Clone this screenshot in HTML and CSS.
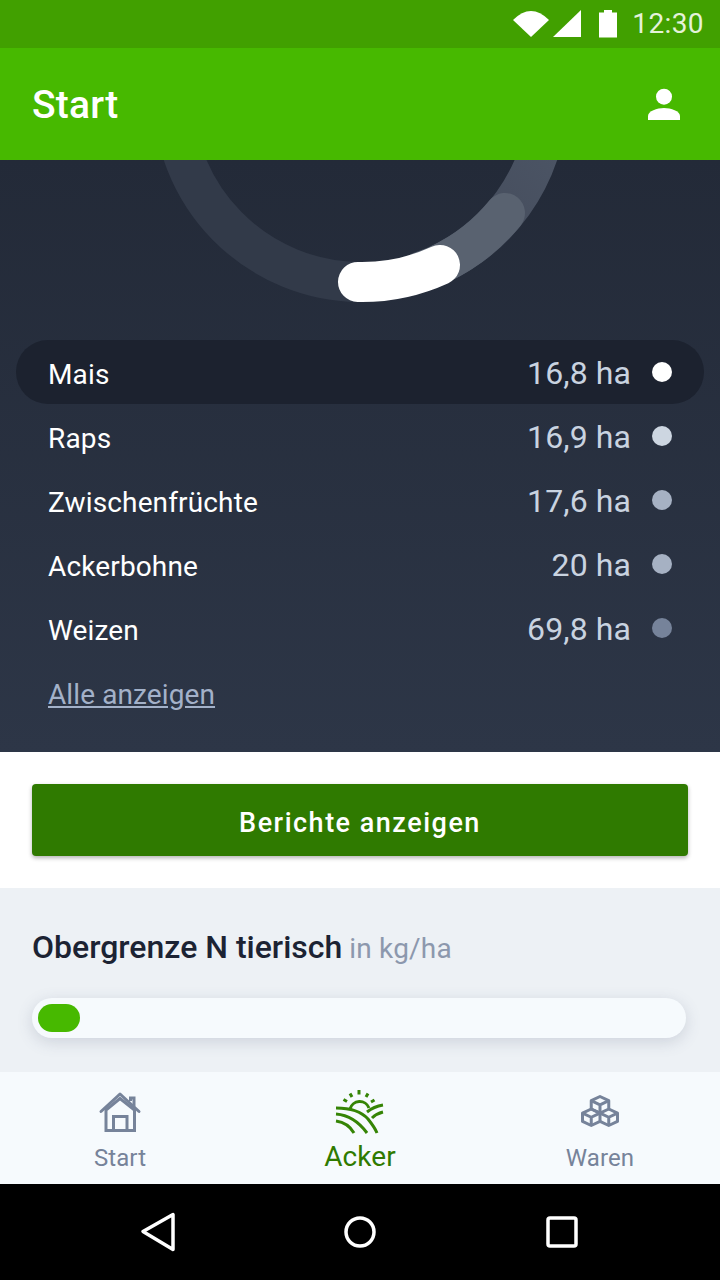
FILE: index.html
```html
<!DOCTYPE html>
<html lang="de">

<head>
    <meta charset="UTF-8">
    <meta name="viewport" content="width=device-width, initial-scale=1.0">
    <title>Start</title>
    <link rel="stylesheet" href="styles.css">
</head>

<body>
    <div class="statusbar">
        <svg class="status-icons" width="104" height="48" viewBox="0 0 104 48">
            <path d="M0 20Q18 2 36 20L18 37Z" fill="#fff" />
            <path d="M40 37L68 10V37Z" fill="#fff" />
            <path d="M86 12.500V37.500H104V12.500H99V10H91V12.500Z" fill="#fff" />
        </svg>
        <span class="clock">12:30</span>
    </div>

    <div class="topbar">
        <h1>Start</h1>
        <svg width="36" height="36" viewBox="0 0 36 36">
            <circle cx="18" cy="10.700" r="8" fill="#fff" />
            <path d="M2 34V30C2 25 11 22 18 22S34 25 34 30V34Z" fill="#fff" />
        </svg>
    </div>

    <div class="dark">
        <svg class="donut" width="720" height="180" viewBox="0 0 720 180">
            <defs>
                <linearGradient id="trackRight" x1="420" x2="560" y1="130" y2="0" gradientUnits="userSpaceOnUse">
                    <stop offset="0" stop-color="#596270" />
                    <stop offset="0.6" stop-color="#474f5f" />
                    <stop offset="1" stop-color="#4b5464" />
                </linearGradient>
            </defs>
            <path class="arc" d="M173 -66A188 188 0 0 0 358 122" stroke="#323a49" stroke-linecap="butt" />
            <path class="arc" d="M420 112A188 188 0 0 0 548 -66" stroke="url(#trackRight)" stroke-linecap="butt" />
            <path class="arc" d="M440 104A188 188 0 0 0 505 53" stroke="#596270" />
            <path class="arc" d="M358 122A188 188 0 0 0 440 105" stroke="#fff" />
        </svg>

        <ul class="crops">
            <li class="crop active"><span class="crop-name">Mais</span><span class="crop-val">16,8 ha</span><i class="dot dot1"></i></li>
            <li class="crop"><span class="crop-name">Raps</span><span class="crop-val">16,9 ha</span><i class="dot dot2"></i></li>
            <li class="crop"><span class="crop-name">Zwischenfrüchte</span><span class="crop-val">17,6 ha</span><i class="dot dot3"></i></li>
            <li class="crop"><span class="crop-name">Ackerbohne</span><span class="crop-val">20 ha</span><i class="dot dot3"></i></li>
            <li class="crop"><span class="crop-name">Weizen</span><span class="crop-val">69,8 ha</span><i class="dot dot4"></i></li>
        </ul>
        <a class="show-all" href="#">Alle anzeigen</a>
    </div>

    <div class="actions">
        <button type="button" class="report-btn">Berichte anzeigen</button>
    </div>

    <div class="limit">
        <h2>Obergrenze N tierisch <small>in kg/ha</small></h2>
        <div class="bar">
            <div class="bar-fill" style="width: 42px"></div>
        </div>
    </div>

    <div class="tabs">
        <div class="tab">
            <svg width="48" height="48" viewBox="0 0 48 48" fill="none" stroke="#76839a" stroke-width="3">
                <path d="M5 23.500L24 6L43 23.500" stroke-linecap="round" stroke-linejoin="round" />
                <path d="M34.500 13V10H38V18.500" />
                <path d="M10 42.500V22L24 10.500L38.500 22V42.500Z" />
                <path d="M17.500 42V28.500H31V42" />
            </svg>
            <span>Start</span>
        </div>
        <div class="tab current">
            <svg width="52" height="48" viewBox="0 0 52 48" fill="none" stroke="#358405" stroke-width="3">
                <path d="M25 2V6.500M16 5.500L18 9M34 5.500L32 9M9.500 11.500L13 13.500M40.500 12L37 14" />
                <path d="M16 21A10 10 0 0 1 35 20" />
                <path d="M2 20C12 20 26 22 34 31C38 36 41 40 43 45" />
                <path d="M2 26C14 27 25 34 33 45" />
                <path d="M2 33C9 34 16 38 20 45" />
                <path d="M49 17C43 18 38 20 33 24" />
                <path d="M49 24C45 25 41 27 38 30" />
            </svg>
            <span>Acker</span>
        </div>
        <div class="tab">
            <svg width="48" height="48" viewBox="0 0 48 48" fill="none" stroke="#76839a" stroke-width="3" stroke-linejoin="round">
                <path d="M24 8.500L32.750 12.650V21L24 25.100L15.250 21V12.650Z" />
                <path d="M15.250 12.650L24 16.800L32.750 12.650M24 16.800V25.100" />
                <path d="M15.250 21L24 25.100V33.400L15.250 37.500L6.500 33.400V25.100Z" />
                <path d="M6.500 25.100L15.250 29.250L24 25.100M15.250 29.250V37.500" />
                <path d="M32.750 21L41.500 25.100V33.400L32.750 37.500L24 33.400" />
                <path d="M24 25.100L32.750 29.250L41.500 25.100M32.750 29.250V37.500" />
            </svg>
            <span>Waren</span>
        </div>
    </div>

    <div class="navkeys">
        <svg width="40" height="44" viewBox="0 0 40 44" fill="none" stroke="#fff" stroke-width="3.500" stroke-linejoin="round">
            <path d="M4 21.500L34 4.500V39.500Z" />
        </svg>
        <svg class="key-home" width="36" height="36" viewBox="0 0 36 36" fill="none" stroke="#fff" stroke-width="3.500">
            <circle cx="18" cy="18" r="14" />
        </svg>
        <svg class="key-recent" width="36" height="36" viewBox="0 0 36 36" fill="none" stroke="#fff" stroke-width="3.500" stroke-linejoin="round">
            <rect x="4" y="4" width="28" height="28" rx="2" />
        </svg>
    </div>
</body>

</html>
```

FILE: styles.css
```css
* {
    box-sizing: border-box;
}

html, body {
    margin: 0;
    padding: 0;
}

body {
    width: 720px;
    height: 1280px;
    overflow: hidden;
    font-family: Roboto, "Noto Sans", sans-serif;
    background-color: white;
}

.statusbar {
    height: 48px;
    background-color: #41a000;
    display: flex;
    align-items: center;
    justify-content: flex-end;
    padding-right: 16px;
}

.status-icons {
    flex: none;
    margin-right: 15px;
}

.clock {
    color: #e4f2d9;
    font-size: 28px;
    letter-spacing: 0.4px;
    line-height: 48px;
}

.topbar {
    height: 112px;
    background-color: #47b900;
    display: flex;
    align-items: center;
    justify-content: space-between;
    padding: 0 38px 0 32px;
}

.topbar h1 {
    margin: 0;
    padding-top: 2px;
    color: white;
    font-size: 39px;
    letter-spacing: 0.2px;
    font-weight: 500;
}

.dark {
    height: 592px;
    background: linear-gradient(#232a38, #2d3647);
}

.donut {
    display: block;
}

.arc {
    fill: none;
    stroke-width: 40;
    stroke-linecap: round;
}

.crops {
    list-style: none;
    margin: 0;
    padding: 0 16px;
}

.crop {
    height: 64px;
    display: flex;
    align-items: center;
    padding: 0 32px;
    border-radius: 32px;
}

.crop.active {
    background-color: #1c222f;
}

.crop-name {
    flex: 1;
    color: white;
    font-size: 28px;
    letter-spacing: 0.14px;
    padding-top: 4px;
}

.crop-val {
    color: #c9d3e0;
    font-size: 32px;
    letter-spacing: 0.1px;
    margin-right: 21px;
    padding-top: 2px;
}

.dot {
    width: 20px;
    height: 20px;
    border-radius: 50%;
    margin-bottom: 1px;
}

.dot1 { background-color: white; }
.dot2 { background-color: #cdd6e1; }
.dot3 { background-color: #a6b1c3; }
.dot4 { background-color: #76839a; }

.show-all {
    display: block;
    width: fit-content;
    margin: 0 0 0 48px;
    height: 64px;
    line-height: 70px;
    color: #a3b1c9;
    font-size: 28px;
    letter-spacing: 0.1px;
}

.actions {
    height: 136px;
    padding: 32px;
    background-color: white;
}

.report-btn {
    display: block;
    width: 100%;
    height: 72px;
    padding: 5px 0 0;
    border: none;
    border-radius: 4px;
    background-color: #2f7a00;
    color: white;
    font-family: inherit;
    font-size: 27px;
    font-weight: 500;
    letter-spacing: 1.5px;
    box-shadow: 0 2px 4px rgba(0, 0, 0, 0.3);
}

.limit {
    height: 184px;
    background-color: #edf1f5;
    padding: 40px 34px 0 32px;
}

.limit h2 {
    margin: 0;
    color: #1c2333;
    font-size: 32px;
    font-weight: 500;
    line-height: 38px;
}

.limit small {
    margin-left: -1px;
    color: #8c98ad;
    font-size: 28px;
    letter-spacing: 0.2px;
    font-weight: 400;
}

.bar {
    margin-top: 30px;
    height: 40px;
    padding: 6px;
    border-radius: 20px;
    background-color: #f6fafd;
    box-shadow: 0 4px 16px rgba(80, 90, 120, 0.2);
}

.bar-fill {
    height: 28px;
    border-radius: 14px;
    background-color: #47b900;
}

.tabs {
    height: 112px;
    display: flex;
    background-color: #f6fafd;
}

.tab {
    flex: 1;
    display: flex;
    flex-direction: column;
    align-items: center;
    padding-top: 16px;
    color: #76839a;
    font-size: 24px;
    letter-spacing: 0.1px;
}

.tab span {
    margin-top: 8px;
}

.tab.current {
    color: #2f7a00;
    font-size: 28px;
}

.tab.current span {
    margin-top: 4px;
}

.navkeys {
    height: 96px;
    background-color: black;
    display: flex;
    align-items: center;
    padding-left: 139px;
}

.key-home {
    margin-left: 163px;
}

.key-recent {
    margin-left: 166px;
}
```
